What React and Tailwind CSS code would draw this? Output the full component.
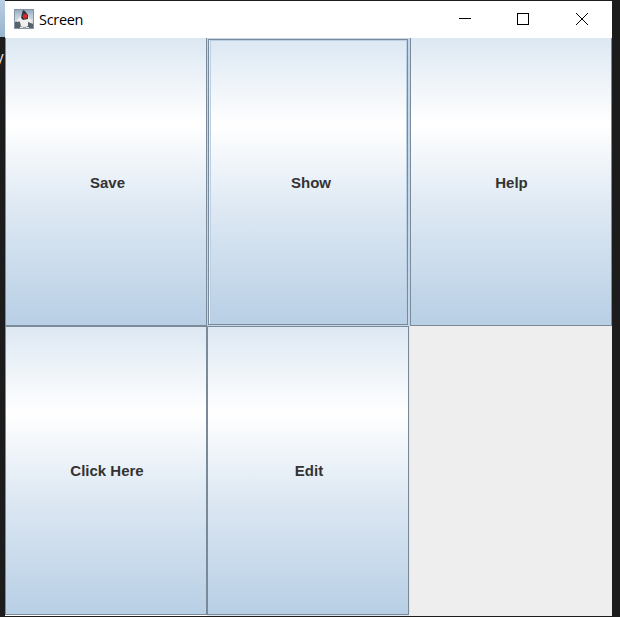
import React from 'react';

const METAL =
  'bg-[linear-gradient(to_bottom,#dde8f3_0%,#ffffff_30%,#dde8f3_60%,#b8cfe5_100%)]';

function MetalButton({ label, className = '' }) {
  return (
    <button
      className={`flex min-h-0 min-w-0 items-center justify-center border-[#7a8a99] font-['Liberation_Sans',Arial,sans-serif] text-[15px] leading-[18px] font-bold text-[#333333] ${METAL} ${className}`}
    >
      <span>{label}</span>
    </button>
  );
}

function JavaIcon() {
  return (
    <svg width="20" height="20" viewBox="0 0 20 20" className="mb-px shrink-0">
      <defs>
        <linearGradient id="iconBg" x1="0" y1="0" x2="0" y2="1">
          <stop offset="0" stopColor="#8ba3ba" />
          <stop offset="0.3" stopColor="#b9c9d6" />
          <stop offset="0.65" stopColor="#d5dce3" />
          <stop offset="1" stopColor="#8b98a5" />
        </linearGradient>
      </defs>
      <rect width="20" height="20" fill="url(#iconBg)" />
      <path d="M1 13 L5 12 L7 15 L6 19 H1 Z M14 13 L19 15 V19 H13Z" fill="#56616b" />
      <path d="M7 7 L3 11 L3 13 L6 12 L7 17 L10 18 L14 17 L14 12 L17 14 L18 12 L14 8Z" fill="#f0f0ec" />
      <path d="M9 1 L8 4 L7 9 L9 11 L14 10 L14 6 L11 2Z" fill="#34383c" />
      <path d="M6 18.5 H9 M12 18.5 H15" fill="none" stroke="#e4e6e6" strokeWidth="1" />
      <ellipse cx="11" cy="7.3" rx="2.3" ry="2.4" fill="#e0242c" />
      <path d="M0.5 0.5 V19.5 H19.5 V0.5Z" fill="none" stroke="#8795a2" strokeWidth="1" />
    </svg>
  );
}

function TitleBar() {
  return (
    <header className="flex h-[37px] shrink-0 items-center bg-white pl-[9px] text-black">
      <JavaIcon />
      <span className="ml-[5px] flex-1 font-['Open_Sans','Noto_Sans',sans-serif] text-[14.5px] leading-[20px] tracking-[-0.3px]">
        Screen
      </span>
      <svg width="174" height="37" viewBox="0 0 174 37" fill="none" stroke="#000" strokeWidth="1">
        <path d="M21 17.5H33" shapeRendering="crispEdges" />
        <rect x="79.5" y="12.5" width="11" height="11" shapeRendering="crispEdges" />
        <path d="M138 12L150 24M150 12L138 24" />
      </svg>
    </header>
  );
}

export default function App() {
  return (
    <div className="flex h-[617px] w-[620px] overflow-hidden bg-[#1c1c1c]">
      <aside className="w-[5px] shrink-0 overflow-hidden">
        <div className="h-[37px] bg-gradient-to-b from-[#b9cee2] to-[#98b4cf]" />
        <div className="mt-[10px] -ml-[4px] font-['Noto_Sans',sans-serif] text-[15px] leading-[18px] text-[#dddddd]">y</div>
      </aside>
      <div className="mt-px flex h-[615px] w-[607px] shrink-0 flex-col bg-[#eeeeee]">
        <TitleBar />
        <main className="grid min-h-0 flex-1 grid-cols-[202px_203px_202px] grid-rows-[288px_290px]">
          <MetalButton label="Save" className="border-r border-b border-l pt-[2px] pl-[3px]" />
          <div className="flex bg-[#c4d6e7] pt-px pr-[2px] pb-px pl-px">
            <div className="flex flex-1 border border-[#7a8a99] bg-[#e6eef6] pl-px">
              <MetalButton
                label="Show"
                className="flex-1 border-t border-r border-l border-t-[#b8cfe5] border-r-[#b8cfe5] border-l-[#b8cfe5] pl-[5px]"
              />
            </div>
          </div>
          <MetalButton label="Help" className="border-r border-b border-l pt-[2px] pl-px" />
          <div className="flex bg-white pb-px">
            <MetalButton label="Click Here" className="flex-1 border pl-[2px]" />
          </div>
          <div className="flex bg-[#dce7f1] pr-px pb-px">
            <MetalButton label="Edit" className="flex-1 border pl-[2px]" />
          </div>
        </main>
      </div>
    </div>
  );
}
